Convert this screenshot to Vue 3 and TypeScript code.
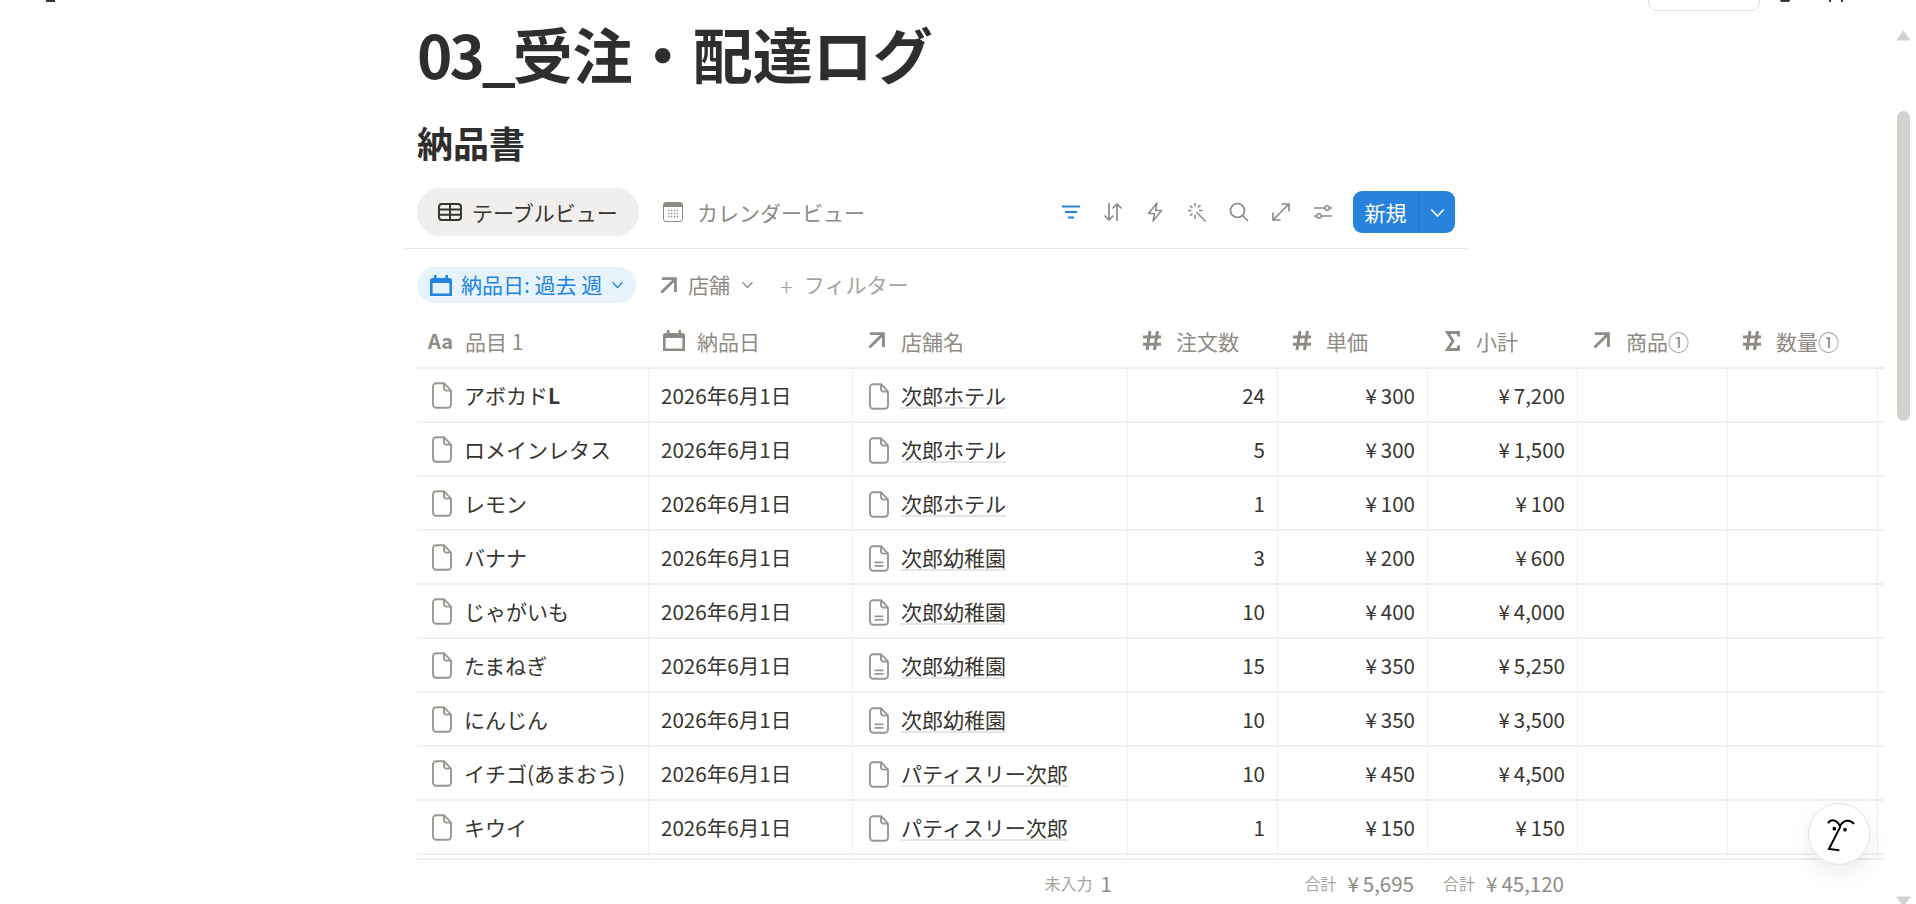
<template>
  <div class="app">
    <svg class="sprite" xmlns="http://www.w3.org/2000/svg">
      <symbol id="doc" viewBox="0 0 20 27">
        <path d="M4.2 1.2H12l7 7.4v13.9a3.2 3.2 0 0 1-3.2 3.2H4.2A3.2 3.2 0 0 1 1 22.500V4.400a3.200 3.200 0 0 1 3.200-3.200z" fill="none" stroke="currentColor" stroke-width="1.900" stroke-linejoin="round" />
        <path d="M12 1.200v4.900a2.500 2.500 0 0 0 2.500 2.500H19" fill="none" stroke="currentColor" stroke-width="1.900" />
      </symbol>
      <symbol id="doc-lines" viewBox="0 0 20 27">
        <use href="#doc" />
        <path d="M5.500 17.300h9M5.500 20.900h9" fill="none" stroke="currentColor" stroke-width="1.800" />
      </symbol>
      <symbol id="arrow" viewBox="0 0 18 18">
        <path d="M2 1.700h14.300V16M16 2 1.500 16.500" fill="none" stroke="currentColor" stroke-width="3" />
      </symbol>
      <symbol id="cal" viewBox="0 0 22 21">
        <path fill="currentColor" d="M4 0h2.500v3h9V0H18v3h1.500A2.500 2.500 0 0 1 22 5.500V21H0V5.500A2.500 2.500 0 0 1 2.500 3H4zM2.600 8v10.400h16.800V8z" />
      </symbol>
      <symbol id="hash" viewBox="0 0 20 21">
        <path d="M8 1 5 20M15.500 1l-3 19M1 7h18M1 14.300h18" fill="none" stroke="currentColor" stroke-width="3" />
      </symbol>
      <symbol id="sigma" viewBox="0 0 14 20">
        <path d="M13 5.500V1.500H2l5.500 8.500L2 18.500h11v-4" fill="none" stroke="currentColor" stroke-width="2.800" />
      </symbol>
      <symbol id="chev" viewBox="0 0 12 8">
        <path d="M1 1.200 6 6.500l5-5.300" fill="none" stroke="currentColor" stroke-width="1.300" />
      </symbol>
    </svg>

    <div class="main">
      <div class="topbar">
        <span class="top-mark"></span>
        <span class="top-share"></span>
        <span class="top-ring"></span>
        <span class="top-dot"></span>
        <span class="top-dot top-dot--last"></span>
      </div>

      <h1 class="title"><span class="title__num">03_</span>受注・配達ログ</h1>
      <h2 class="subtitle">納品書</h2>

      <div class="views">
        <div class="tab tab--active">
          <svg class="tab__icon" viewBox="0 0 24 18">
            <path d="M4 1h16a3 3 0 0 1 3 3v10a3 3 0 0 1-3 3H4a3 3 0 0 1-3-3V4a3 3 0 0 1 3-3zM1 6.500h22M1 11.700h22M12 1v16" fill="none" stroke="currentColor" stroke-width="2" />
          </svg>
          テーブルビュー
        </div>
        <div class="tab">
          <svg class="tab__icon tab__icon--cal" viewBox="0 0 20 20">
            <rect x="0.500" y="0.500" width="19" height="19" rx="2.500" fill="#fff" stroke="currentColor" />
            <path d="M3 0.500h14A2.500 2.500 0 0 1 19.500 3v2H.5V3A2.500 2.500 0 0 1 3 .5z" fill="currentColor" />
            <path d="M5 8.500h10M5 11.500h10M5 14.500h10" fill="none" stroke="currentColor" stroke-width="1.400" stroke-dasharray="1.400 1.500" />
          </svg>
          カレンダービュー
        </div>

        <div class="tools">
          <svg class="tool tool--blue" viewBox="0 0 20 14"><path d="M1 1.500h18M4 7h12M7 12.500h6" fill="none" stroke="currentColor" stroke-width="2" /></svg>
          <svg class="tool" viewBox="0 0 20 20"><path d="M6 1v17M1.500 13.500 6 18l4.500-4.500M14 19V2M9.500 6.500 14 2l4.500 4.500" fill="none" stroke="currentColor" stroke-width="1.700" /></svg>
          <svg class="tool" viewBox="0 0 20 20"><path d="M12 1 3.500 11.500h6L8 19l8.500-10.500h-6z" fill="none" stroke="currentColor" stroke-width="1.500" stroke-linejoin="round" /></svg>
          <svg class="tool" viewBox="0 0 20 20"><path d="M8 1v3.500M8 12.500V17M1 8.500h3.500M12 8.500h3.500M3 3.500 5.500 6M13.500 3 11 5.500M3 14 5.500 11.500M9.500 10l9 9.500" fill="none" stroke="currentColor" stroke-width="1.500" /></svg>
          <svg class="tool" viewBox="0 0 20 20"><circle cx="8.500" cy="8.500" r="7" fill="none" stroke="currentColor" stroke-width="1.700" /><path d="m13.500 13.500 5.500 5.500" fill="none" stroke="currentColor" stroke-width="1.700" /></svg>
          <svg class="tool" viewBox="0 0 20 20"><path d="M18 2 2 18M10.500 2H18v7.500M2 10.500V18h7.500" fill="none" stroke="currentColor" stroke-width="1.700" /></svg>
          <svg class="tool" viewBox="0 0 20 20"><path d="M1 6h11M16 6h3M1 14h3M8 14h11" fill="none" stroke="currentColor" stroke-width="1.700" /><circle cx="14" cy="6" r="2.200" fill="none" stroke="currentColor" stroke-width="1.500" /><circle cx="6" cy="14" r="2.200" fill="none" stroke="currentColor" stroke-width="1.500" /></svg>
          <div class="new-btn">
            <span class="new-btn__label">新規</span>
            <span class="new-btn__more"><svg class="new-btn__chev"><use href="#chev" /></svg></span>
          </div>
        </div>
      </div>

      <div class="filters">
        <div class="filter filter--active">
          <svg class="filter__cal"><use href="#cal" /></svg>
          <span class="filter__text">納品日: 過去 週</span>
          <svg class="filter__chev"><use href="#chev" /></svg>
        </div>
        <div class="filter filter--store">
          <svg class="filter__arrow"><use href="#arrow" /></svg>
          <span class="filter__text">店舗</span>
          <svg class="filter__chev"><use href="#chev" /></svg>
        </div>
        <div class="filter filter--add"><span class="filter__plus">+</span><span class="filter__text">フィルター</span></div>
      </div>

      <div class="table">
        <div class="grid grid--head">
          <div class="th th--title"><span class="th__aa">Aa</span>品目 1</div>
          <div v-for="col in columns" :key="col.label" class="th">
            <span class="th__box"><svg :class="`th__icon th__icon--${col.icon}`"><use :href="`#${col.icon}`" /></svg></span>
            {{ col.label }}
          </div>
        </div>

        <div class="rows">
          <div v-for="(row, i) in rows" :key="i" class="grid grid--row">
            <div class="td td--name">
              <svg class="doc"><use href="#doc" /></svg>
              <span>{{ row.name }}<b v-if="row.suffix" class="suffix">{{ row.suffix }}</b></span>
            </div>
            <div class="td td--date">2026年6月1日</div>
            <div class="td td--store">
              <svg class="doc"><use :href="row.store === '次郎幼稚園' ? '#doc-lines' : '#doc'" /></svg>
              <span class="store-link">{{ row.store }}</span>
            </div>
            <div class="td td--num">{{ row.qty }}</div>
            <div class="td td--num"><span class="yen">¥</span>{{ row.price }}</div>
            <div class="td td--num"><span class="yen">¥</span>{{ row.total }}</div>
            <div class="td"></div>
            <div class="td"></div>
            <div class="td"></div>
          </div>
          <div class="grid grid--row">
            <div v-for="n in 9" :key="n" class="td"></div>
          </div>
        </div>

        <div class="grid grid--foot">
          <div></div>
          <div></div>
          <div class="tf tf--empty"><small>未入力</small>1</div>
          <div></div>
          <div class="tf"><small>合計</small><span><span class="yen">¥</span>5,695</span></div>
          <div class="tf"><small>合計</small><span><span class="yen">¥</span>45,120</span></div>
        </div>
      </div>
    </div>

    <div class="scrollbar">
      <svg class="scrollbar__arrow" viewBox="0 0 15 11"><path d="M7.500 1 14 10H1z" fill="currentColor" stroke="currentColor" stroke-linejoin="round" /></svg>
      <div class="scrollbar__thumb"></div>
      <svg class="scrollbar__arrow scrollbar__arrow--down" viewBox="0 0 15 11"><path d="M7.500 10 14 1H1z" fill="currentColor" stroke="currentColor" stroke-linejoin="round" /></svg>
    </div>

    <button class="help">
      <svg viewBox="84 70 186 186" width="62" height="62">
        <path d="M144 131c8-13 27-13 36 9 9-20 30-22 42-7M181 141l-34 67 31 4" fill="none" stroke="#000" stroke-width="6" />
        <circle cx="163" cy="147" r="5.500" />
        <circle cx="195" cy="150" r="5.500" />
      </svg>
    </button>
  </div>
</template>

<script setup lang="ts">
interface Row {
  name: string
  suffix?: string
  store: string
  qty: number
  price: string
  total: string
}

const columns = [
  { label: '納品日', icon: 'cal' },
  { label: '店舗名', icon: 'arrow' },
  { label: '注文数', icon: 'hash' },
  { label: '単価', icon: 'hash' },
  { label: '小計', icon: 'sigma' },
  { label: '商品①', icon: 'arrow' },
  { label: '数量①', icon: 'hash' }
]

const hotel = '次郎ホテル'
const kinder = '次郎幼稚園'
const patisserie = 'パティスリー次郎'

const rows: Row[] = [
  { name: 'アボカド', suffix: 'L', store: hotel, qty: 24, price: '300', total: '7,200' },
  { name: 'ロメインレタス', store: hotel, qty: 5, price: '300', total: '1,500' },
  { name: 'レモン', store: hotel, qty: 1, price: '100', total: '100' },
  { name: 'バナナ', store: kinder, qty: 3, price: '200', total: '600' },
  { name: 'じゃがいも', store: kinder, qty: 10, price: '400', total: '4,000' },
  { name: 'たまねぎ', store: kinder, qty: 15, price: '350', total: '5,250' },
  { name: 'にんじん', store: kinder, qty: 10, price: '350', total: '3,500' },
  { name: 'イチゴ(あまおう)', store: patisserie, qty: 10, price: '450', total: '4,500' },
  { name: 'キウイ', store: patisserie, qty: 1, price: '150', total: '150' }
]
</script>

<style scoped>
.app {
  display: flex;
  height: 904px;
  overflow: hidden;
  background: #fff;
  color: #37352f;
  font-family: "Noto Sans CJK JP", "Noto Sans", sans-serif;
  font-size: 21px;
}

.sprite {
  display: none;
}

.main {
  width: 1888px;
  flex: none;
  overflow: hidden;
}

.topbar {
  display: flex;
  align-items: flex-end;
  height: 11px;
  padding-left: 46px;
}

.top-mark {
  align-self: flex-start;
  width: 9px;
  height: 2px;
  background: #37352f;
}

.top-share {
  width: 110px;
  height: 20px;
  margin-left: 1593px;
  border: 1px solid #e4e4e2;
  border-radius: 8px;
}

.top-ring {
  align-self: flex-start;
  width: 10px;
  height: 2px;
  margin-left: 20px;
  background: #37352f;
  border-radius: 0 0 5px 5px;
}

.top-dot {
  align-self: flex-start;
  width: 2px;
  height: 2px;
  margin-left: 39px;
  background: #37352f;
}

.top-dot--last {
  margin-left: 10px;
}

.title {
  margin: 7px 0 0 417px;
  font-size: 60px;
  line-height: 70px;
  font-weight: 700;
  color: #2e2e2c;
}

.title__num {
  letter-spacing: -3px;
}

.subtitle {
  margin: 31px 0 0 417px;
  font-size: 36px;
  line-height: 46px;
  font-weight: 700;
  color: #2e2e2c;
}

.views {
  display: flex;
  align-items: center;
  gap: 6px;
  width: 1062px;
  box-sizing: border-box;
  margin: 23px 0 0 405px;
  padding: 0 12px 12px;
  border-bottom: 1px solid #e6e6e4;
}

.tab {
  display: flex;
  align-items: center;
  gap: 10px;
  height: 48px;
  padding: 0 20px 0 18px;
  color: #8f8b84;
}

.tab--active {
  width: 222px;
  box-sizing: border-box;
  padding-left: 21px;
  background: #f0efed;
  border-radius: 24px;
  color: #37352f;
}

.tab__icon {
  width: 24px;
  height: 18px;
  flex: none;
}

.tab__icon--cal {
  width: 20px;
  height: 20px;
  margin-right: 4px;
}

.tools {
  display: flex;
  align-items: center;
  gap: 22px;
  margin-left: auto;
}

.tool {
  width: 20px;
  height: 20px;
  flex: none;
  color: #8f8b84;
}

.tool--blue {
  height: 14px;
  color: #2383e2;
}

.new-btn {
  display: flex;
  height: 42px;
  margin-left: -2px;
  background: #2783de;
  border-radius: 9px;
  color: #fff;
}

.new-btn__label {
  display: flex;
  align-items: center;
  justify-content: center;
  width: 66px;
  box-sizing: border-box;
  border-right: 1px solid #1f74c8;
}

.new-btn__more {
  display: flex;
  align-items: center;
  justify-content: center;
  width: 36px;
  padding-top: 2px;
  box-sizing: border-box;
}

.new-btn__chev {
  width: 15px;
  height: 10px;
}

.filters {
  display: flex;
  align-items: center;
  margin: 18px 0 0 417px;
}

.filter {
  display: flex;
  align-items: center;
  gap: 12px;
  height: 36px;
  color: #8f8b84;
}

.filter__text {
  margin-bottom: 2px;
}

.filter--active {
  gap: 9px;
  width: 219px;
  box-sizing: border-box;
  margin-right: 24px;
  padding-left: 13px;
  background: #e6f3fb;
  border-radius: 18px;
  color: #2383e2;
}

.filter--store {
  gap: 11px;
  margin-right: 26px;
}

.filter--add {
  gap: 11px;
  color: #a8a49c;
}

.filter__plus {
  font-size: 24px;
  font-weight: 300;
}

.filter__cal {
  width: 22px;
  height: 21px;
  flex: none;
}

.filter__arrow {
  width: 17px;
  height: 17px;
  flex: none;
}

.filter__chev {
  width: 13px;
  height: 8px;
  flex: none;
}

.table {
  width: 1467px;
  margin: 13px 0 0 417px;
  overflow: hidden;
}

.grid {
  display: grid;
  grid-template-columns: 232px 204px 275px repeat(6, 150px);
}

.grid--head {
  height: 53px;
  box-sizing: border-box;
  padding-bottom: 2px;
  border-bottom: 2px solid #efefed;
}

.th {
  display: flex;
  align-items: center;
  gap: 12px;
  padding-left: 14px;
  color: #8f8b84;
  white-space: nowrap;
}

.th--title {
  gap: 11px;
  padding-left: 11px;
}

.th__aa {
  width: 26px;
  font-size: 20px;
  font-weight: 700;
}

.th__box {
  display: flex;
  align-items: center;
  width: 22px;
  flex: none;
}

.th__icon {
  width: 22px;
  height: 21px;
}

.th__icon--arrow {
  width: 17px;
  height: 17px;
  margin-left: 1px;
}

.th__icon--hash {
  width: 20px;
}

.th__icon--sigma {
  width: 15px;
  height: 20px;
  margin-left: 3px;
}

.rows {
  height: 489px;
  overflow: hidden;
}

.grid--row {
  height: 54px;
  box-sizing: border-box;
  border-bottom: 2px solid #f0f0ee;
}

.td {
  display: flex;
  align-items: center;
  min-width: 0;
  padding: 0 12px;
  border-right: 1px solid #f0f0ee;
  white-space: nowrap;
}

.td--name {
  gap: 12px;
  padding-left: 15px;
}

.td--date {
  font-size: 20.600px;
}

.td--store {
  gap: 12px;
  padding: 2px 0 0 16px;
}

.td--num {
  justify-content: flex-end;
  font-size: 20.500px;
}

.doc {
  width: 20px;
  height: 27px;
  flex: none;
  color: #9b9790;
}

.suffix {
  font-weight: 700;
}

.store-link {
  border-bottom: 2px solid #e6e6e4;
  line-height: 24px;
}

.yen {
  margin-right: 4px;
}

.grid--foot {
  height: 46px;
  box-sizing: border-box;
  padding-top: 2px;
  border-top: 2px solid #efefed;
}

.tf {
  display: flex;
  align-items: center;
  justify-content: flex-end;
  gap: 11px;
  padding-right: 14px;
  color: #8f8b84;
  font-size: 20.500px;
}

.tf--empty {
  gap: 8px;
  padding-right: 16px;
}

.tf small {
  color: #a8a49c;
  font-size: 16px;
}

.scrollbar {
  display: flex;
  flex-direction: column;
  align-items: center;
  width: 28px;
  box-sizing: border-box;
  padding: 30px 5px 0 8px;
  color: #d3d3ce;
}

.scrollbar__arrow {
  width: 15px;
  height: 11px;
  flex: none;
}

.scrollbar__thumb {
  width: 13px;
  height: 310px;
  margin-top: 70px;
  background: #d3d3ce;
  border-radius: 7px;
}

.scrollbar__arrow--down {
  margin-top: auto;
  margin-bottom: -3px;
}

.help {
  position: absolute;
  left: 1808px;
  top: 803px;
  width: 62px;
  height: 62px;
  padding: 0;
  background: #fff;
  border: 1px solid #e2e2df;
  border-radius: 50%;
  box-shadow: 0 8px 24px rgba(0, 0, 0, 0.08);
}

.help svg {
  display: block;
  margin: -1px;
}
</style>
